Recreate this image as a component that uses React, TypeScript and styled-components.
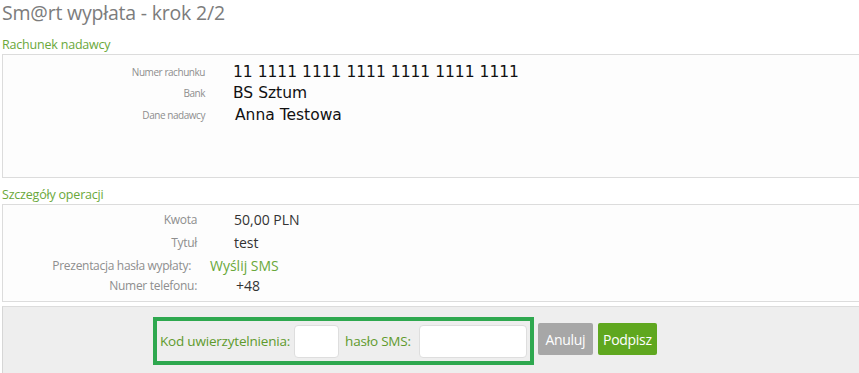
import styled, { createGlobalStyle } from 'styled-components';

const GlobalStyle = createGlobalStyle`
    body {
        margin: 0;
        background: #fff;
        font-family: "Open Sans", "Noto Sans", sans-serif;
    }
`;

const Page = styled.div`
    padding-left: 2px;
    height: 373px;
    overflow: hidden;
    display: flex;
    flex-direction: column;
`;

const Title = styled.h1`
    margin: 0;
    height: 28px;
    line-height: 26px;
    font-size: 19.5px;
    font-weight: 400;
    color: #7c7c7c;
    letter-spacing: -0.2px;
`;

const SectionTitle = styled.div`
    height: 26px;
    padding-top: 8px;
    box-sizing: border-box;
    line-height: 18px;
    font-size: 12.5px;
    color: #6aa83a;
    letter-spacing: -0.2px;
`;

const Panel = styled.div<{ $h: number; $pt: number }>`
    height: ${p => p.$h}px;
    box-sizing: border-box;
    border: 1px solid #dcdcdc;
    border-right: none;
    background: #fdfdfd;
    padding-top: ${p => p.$pt}px;
`;

const Row = styled.div<{ $label: number; $gap: number; $h: number }>`
    display: grid;
    grid-template-columns: ${p => p.$label}px auto;
    column-gap: ${p => p.$gap}px;
    align-items: center;
    height: ${p => p.$h}px;
`;

const Label = styled.span<{ $size: number; $tight?: boolean }>`
    text-align: right;
    font-size: ${p => p.$size}px;
    color: #8e8e8e;
    letter-spacing: ${p => (p.$tight ? '-0.45px' : '-0.3px')};
    white-space: nowrap;
`;

const BigValue = styled.span`
    font-family: "DejaVu Sans", Verdana, sans-serif;
    font-size: 15.5px;
    color: #111;
`;

const Value = styled.span<{ $green?: boolean }>`
    font-size: 14px;
    color: ${p => (p.$green ? '#6aa83a' : '#333')};
`;

const Spacer = styled.div`
    height: 4px;
    flex-shrink: 0;
`;

const Footer = styled.div`
    flex: 1;
    border-top: 1px solid #dcdcdc;
    border-left: 1px solid #d6d6d6;
    background: #eeeeee;
    padding: 10px 0 0 150px;
    display: flex;
    align-items: flex-start;
    gap: 4px;
`;

const AuthBox = styled.div`
    display: flex;
    align-items: center;
    height: 48px;
    box-sizing: border-box;
    border: 4px solid #2ea84f;
    padding: 0 3px;
`;

const AuthLabel = styled.span<{ $after: number }>`
    font-size: 13.5px;
    color: #5e9a2c;
    letter-spacing: -0.2px;
    margin-right: ${p => p.$after}px;
`;

const Input = styled.input<{ $w: number; $after?: number }>`
    width: ${p => p.$w}px;
    height: 33px;
    box-sizing: border-box;
    border: 1px solid #dedede;
    border-radius: 4px;
    background: #fff;
    margin-right: ${p => p.$after ?? 0}px;
    outline: none;
`;

const Button = styled.button<{ $primary?: boolean; $w: number }>`
    margin-top: 6px;
    width: ${p => p.$w}px;
    height: 32px;
    padding: 0;
    border: none;
    border-radius: 2px;
    font-family: "Open Sans", sans-serif;
    font-size: 14px;
    letter-spacing: -0.3px;
    color: #fff;
    background: ${p => (p.$primary ? '#5fa71f' : '#a7a7a7')};

    & + & {
        margin-left: 1px;
    }
`;

export default function App() {
    return (
        <Page>
            <GlobalStyle />
            <Title>Sm@rt wypłata - krok 2/2</Title>

            <SectionTitle>Rachunek nadawcy</SectionTitle>
            <Panel $h={124} $pt={6}>
                <Row $label={202} $gap={28} $h={21.5}>
                    <Label $size={10} $tight>Numer rachunku</Label>
                    <BigValue>11 1111 1111 1111 1111 1111 1111</BigValue>
                </Row>
                <Row $label={202} $gap={28} $h={21.5}>
                    <Label $size={10} $tight>Bank</Label>
                    <BigValue>BS Sztum</BigValue>
                </Row>
                <Row $label={202} $gap={30} $h={21.5}>
                    <Label $size={10} $tight>Dane nadawcy</Label>
                    <BigValue>Anna Testowa</BigValue>
                </Row>
            </Panel>

            <SectionTitle>Szczegóły operacji</SectionTitle>
            <Panel $h={98} $pt={2}>
                <Row $label={194} $gap={37} $h={24}>
                    <Label $size={12}>Kwota</Label>
                    <Value>50,00 PLN</Value>
                </Row>
                <Row $label={194} $gap={37} $h={23}>
                    <Label $size={12}>Tytuł</Label>
                    <Value>test</Value>
                </Row>
                <Row $label={188} $gap={19} $h={22}>
                    <Label $size={12}>Prezentacja hasła wypłaty:</Label>
                    <Value $green>Wyślij SMS</Value>
                </Row>
                <Row $label={194} $gap={39} $h={19}>
                    <Label $size={12}>Numer telefonu:</Label>
                    <Value>+48</Value>
                </Row>
            </Panel>
            <Spacer />

            <Footer>
                <AuthBox>
                    <AuthLabel $after={4}>Kod uwierzytelnienia:</AuthLabel>
                    <Input $w={45} $after={6} />
                    <AuthLabel $after={8}>hasło SMS:</AuthLabel>
                    <Input $w={108} />
                </AuthBox>
                <Button $w={55}>Anuluj</Button>
                <Button $w={59} $primary>Podpisz</Button>
            </Footer>
        </Page>
    );
}
